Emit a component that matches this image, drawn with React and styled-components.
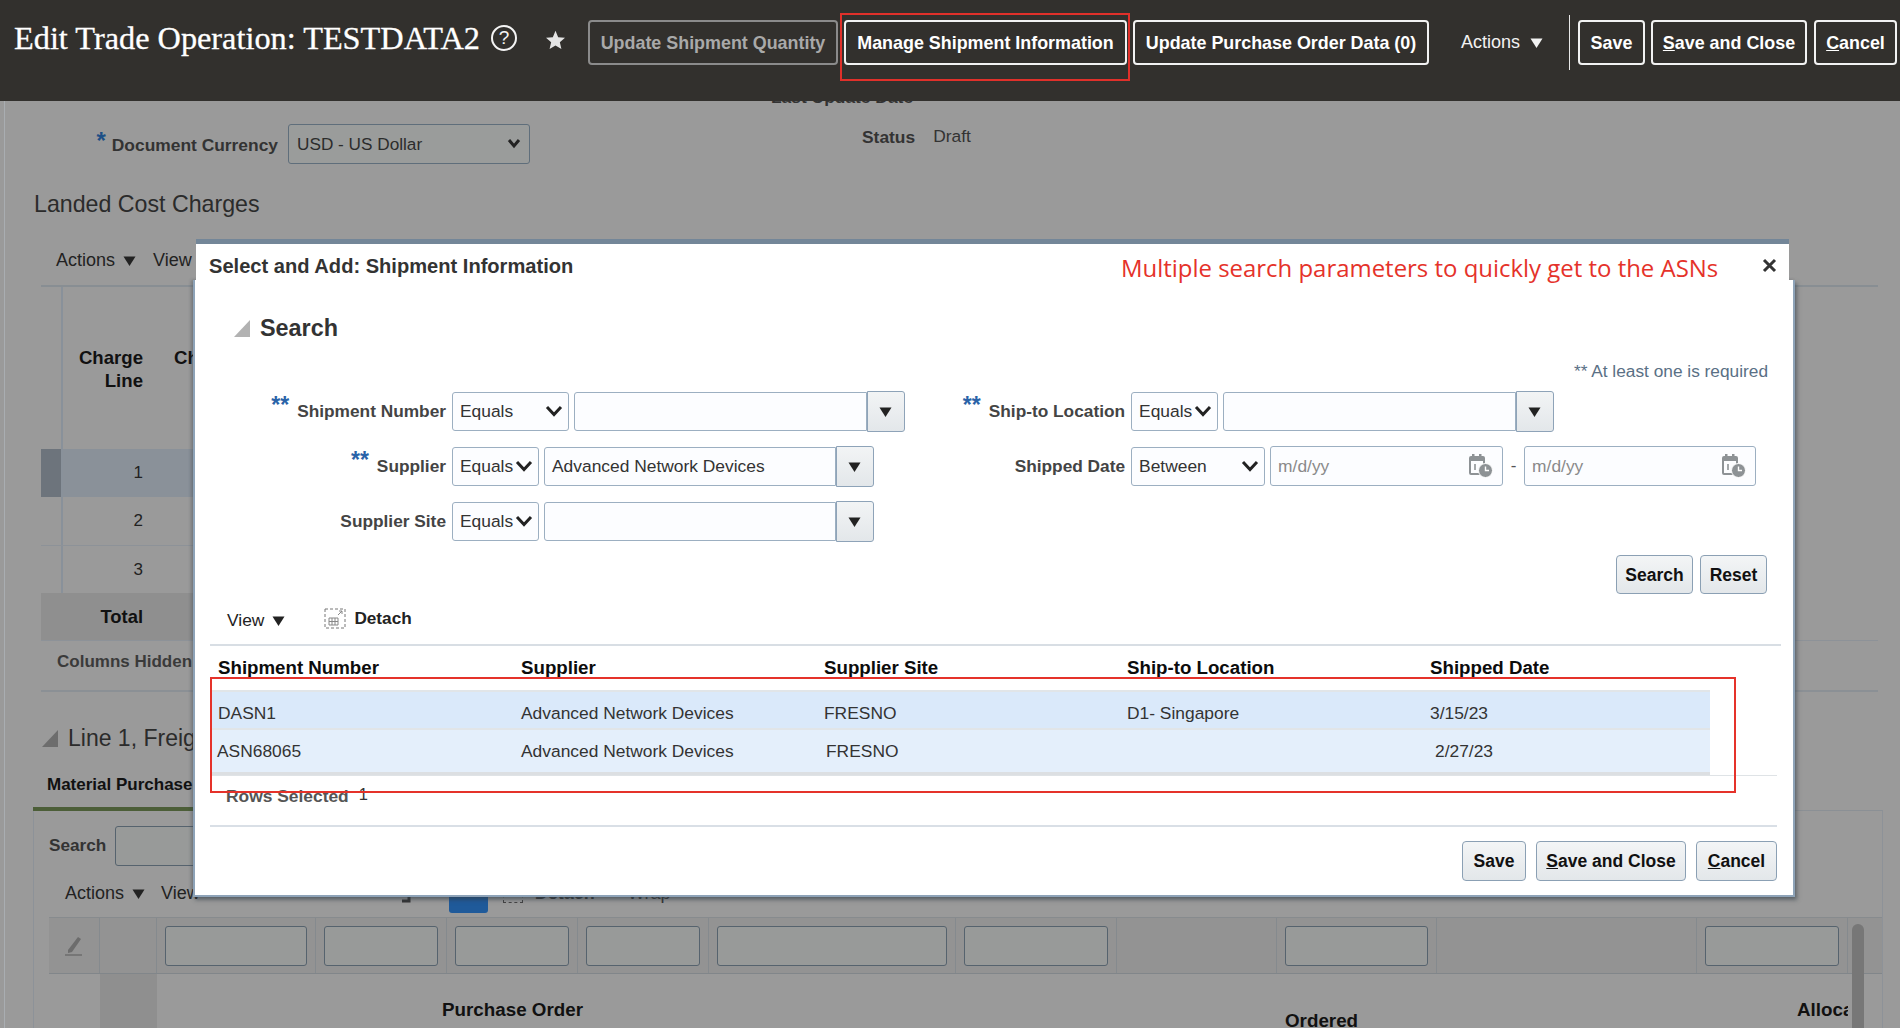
import React from 'react';
import styled, { createGlobalStyle } from 'styled-components';

const GlobalStyle = createGlobalStyle`
  html, body {
    margin: 0;
    padding: 0;
    background: #9a9a9a;
  }
  * {
    box-sizing: border-box;
  }
  body {
    font-family: 'Liberation Sans', Arial, sans-serif;
    color: #333;
  }
`;

const Root = styled.div`
  position: relative;
  width: 1900px;
  height: 1028px;
  overflow: hidden;
  background: #9a9a9a;
`;

/* ---------- page header ---------- */

const Header = styled.header`
  position: relative;
  z-index: 2;
  height: 101px;
  background: #32302d;
  display: flex;
  align-items: flex-start;
  padding: 20px 0 0 14px;
`;

const PageTitle = styled.h1`
  flex: none;
  margin: 0;
  width: 477px;
  height: 36px;
  font: 400 32.3px/36px 'Liberation Serif', Georgia, serif;
  -webkit-text-stroke: 0.3px #fff;
  color: #fff;
  white-space: nowrap;
`;

const HelpMark = styled.span`
  flex: none;
  width: 26px;
  height: 26px;
  margin-top: 5px;
  border: 2px solid #f4f4f4;
  border-radius: 50%;
  color: #f4f4f4;
  font: 400 19px/22px 'Liberation Sans', sans-serif;
  text-align: center;
`;

const StarMark = styled.svg`
  flex: none;
  width: 21px;
  height: 20px;
  margin: 10px 22px 0 28px;
  fill: #e4e4e4;
`;

const HeaderButton = styled.button`
  flex: none;
  height: 45px;
  width: ${props => props.$width}px;
  margin-right: ${props => props.$gap || 0}px;
  padding: 0;
  background: transparent;
  border: 2px solid ${props => (props.disabled ? '#8b8b8b' : '#f2f2f2')};
  border-radius: 4px;
  color: ${props => (props.disabled ? '#a9a9a9' : '#fff')};
  font: 700 17.9px/20px 'Liberation Sans', sans-serif;
  white-space: nowrap;
`;

const HeaderMenu = styled.span`
  flex: none;
  display: flex;
  align-items: center;
  gap: 10px;
  width: 140px;
  height: 45px;
  padding-left: 32px;
  color: #f2f2f2;
  font-size: 18px;
`;

const HeaderDivider = styled.span`
  flex: none;
  width: 1px;
  height: 55px;
  margin: -5px 8px 0 0;
  background: #e8e8e8;
`;

const DropArrow = styled.svg`
  width: ${props => props.$size || 13}px;
  height: ${props => props.$size || 13}px;
  flex: none;
  fill: ${props => props.$color || '#222'};
`;

/* ---------- dimmed page behind the dialog ---------- */

const Content = styled.main`
  margin-left: 4px;
  height: 927px;
  border-left: 1px solid #a9adb1;
  overflow: hidden;
`;

const PeekRow = styled.div`
  height: 18px;
  margin-top: -13px;
  padding-left: 766px;
  font: 700 17.4px/18px 'Liberation Sans', sans-serif;
  color: #333;
`;

const CurrencyRow = styled.div`
  display: flex;
  align-items: flex-start;
  height: 40px;
  margin-top: 18px;
`;

const CurrencyField = styled.div`
  display: flex;
  justify-content: flex-end;
  align-items: center;
  gap: 10px;
  width: 525px;
`;

const DimLabel = styled.span`
  font-weight: 700;
  font-size: 17.4px;
  color: #333;
  margin-top: 3px;
  white-space: nowrap;
`;

const DimStar = styled.span`
  color: #1d4f86;
  font-weight: 700;
  font-size: 24px;
  margin: -6px -4px 0 0;
`;

const DimSelect = styled.div`
  width: 242px;
  height: 40px;
  display: flex;
  align-items: center;
  justify-content: space-between;
  padding: 0 6px 0 8px;
  border: 1.5px solid #5f6e7b;
  border-radius: 3px;
  background: #9a9c9b;
  font-size: 17.2px;
  color: #2c2c2c;
`;

const StatusField = styled.div`
  display: flex;
  gap: 18px;
  margin: 2px 0 0 332px;
  font-size: 17.4px;
  line-height: 20px;
  color: #333;
`;

const StatusLabel = styled.b`
  font-size: 17.4px;
  margin-top: 1px;
`;

const SectionTitle = styled.h2`
  margin: 25px 0 0 29px;
  height: 30px;
  font: 400 23.2px/30px 'Liberation Sans', sans-serif;
  color: #2b2b2b;
`;

const DimToolbar = styled.div`
  display: flex;
  align-items: center;
  height: 24px;
  margin-top: 29px;
  padding-left: 51px;
  font-size: 18px;
  color: #222;
`;

const ToolbarMenu = styled.span`
  display: flex;
  align-items: center;
  gap: ${props => props.$gap || 8}px;
  margin-right: ${props => props.$after || 0}px;
`;

const ChargeTable = styled.section`
  width: 1837px;
  margin: 13px 0 0 36px;
  border-top: 2px solid #888e93;
  border-bottom: 2px solid #8b9095;
`;

const ChargeRow = styled.div`
  display: grid;
  grid-template-columns: 22px 80px 1fr;
  width: 300px;
  height: ${props => props.$height || 48}px;
  background: ${props => props.$background || 'transparent'};
  border-top: ${props => (props.$lined ? '1px solid #8d9298' : 'none')};
`;

const RowMarker = styled.div`
  border-right: 2px solid #89919a;
  background: ${props => props.$background || 'transparent'};
`;

const ChargeHead = styled.div`
  padding-top: 59px;
  font: 700 18.6px/23px 'Liberation Sans', sans-serif;
  color: #111;
  text-align: right;
`;

const ChargeHeadNext = styled(ChargeHead)`
  text-align: left;
  padding-left: 31px;
`;

const ChargeCell = styled.div`
  display: flex;
  align-items: center;
  justify-content: flex-end;
  font-size: 17px;
  color: #222;
`;

const TotalCell = styled.div`
  grid-column: 1 / span 2;
  display: flex;
  align-items: center;
  justify-content: flex-end;
  padding-right: -1px;
  font-weight: 700;
  font-size: 18.4px;
  color: #111;
`;

const HiddenCount = styled.div`
  height: 50px;
  padding: 11px 0 0 16px;
  border-top: 1px solid #8d9298;
  font: 700 17px/20px 'Liberation Sans', sans-serif;
  color: #3a3a3a;
`;

const LineHeading = styled.div`
  display: flex;
  align-items: center;
  gap: 10px;
  height: 30px;
  margin: 31px 0 0 37px;
  font-size: 23px;
  color: #2b2b2b;
`;

const Disclosure = styled.svg`
  width: 16px;
  height: 17px;
  flex: none;
  fill: ${props => props.$color};
`;

const TabLabel = styled.div`
  height: 22px;
  margin: 21px 0 0 42px;
  font: 700 17px/22px 'Liberation Sans', sans-serif;
  color: #111;
`;

const LinePanel = styled.section`
  position: relative;
  width: 1850px;
  height: 300px;
  margin: 14px 0 0 28px;
  border-top: 1px solid #8b9095;
  border-left: 1px solid #8d9298;
  border-right: 1px solid #8d9298;

  /* active tab underline */
  &::before {
    content: '';
    position: absolute;
    top: -4px;
    left: -1px;
    width: 300px;
    height: 4px;
    background: #4c5e38;
  }
`;

const PanelSearch = styled.div`
  display: flex;
  align-items: center;
  gap: 9px;
  height: 39px;
  margin: 15px 0 0 15px;
  font-weight: 700;
  font-size: 17.2px;
  color: #333;
`;

const DimInput = styled.div`
  width: ${props => (props.$width ? `${props.$width}px` : '100%')};
  height: 40px;
  border: 1.5px solid #56636e;
  border-radius: 3px;
  background: #989a99;
`;

const PanelToolbar = styled.div`
  display: flex;
  align-items: center;
  height: 24px;
  margin-top: 16px;
  padding-left: 31px;
  font-size: 18px;
  color: #222;
`;

const FreezeMark = styled.svg`
  width: 14px;
  height: 14px;
  margin: 6px 0 0 199px;
  stroke: #333;
  fill: none;
`;

const BlueToggle = styled.span`
  width: 39px;
  height: 34px;
  margin: 6px 15px 0 36px;
  border-radius: 3px;
  background: #1f5a9a;
`;

const PeekIcon = styled.span`
  width: 20px;
  height: 20px;
  margin-right: 12px;
  border: 1px dashed #444;
`;

const PeekText = styled.span`
  font-weight: ${props => (props.$bold ? 700 : 400)};
  margin-right: 33px;
  color: #333;
`;

const FILTER_COLUMNS = '51px 57px 159px 131px 131px 131px 247px 161px 160px 160px 260px 151px';

const FilterRow = styled.div`
  display: grid;
  grid-template-columns: ${FILTER_COLUMNS};
  height: 57px;
  margin: 12px 0 0 15px;
  background: #939393;
  border-top: 1px solid #878b8e;
  border-bottom: 1px solid #81868a;
`;

const FilterCell = styled.div`
  display: flex;
  align-items: center;
  justify-content: center;
  padding: 0 8px;
  border-right: 1px solid #858a8e;
`;

const HeadRow = styled.div`
  display: grid;
  grid-template-columns: ${FILTER_COLUMNS};
  height: 60px;
  margin-left: 15px;
`;

const HeadSpacer = styled.div`
  background: ${props => props.$background || 'transparent'};
`;

const HeadLabel = styled.div`
  display: flex;
  justify-content: ${props => props.$justify || 'flex-start'};
  padding: ${props => props.$pad || '25px 0 0 8px'};
  font: 700 18.8px/22px 'Liberation Sans', sans-serif;
  color: #111;
  white-space: nowrap;
  overflow: ${props => (props.$clip ? 'hidden' : 'visible')};
`;

const PencilMark = styled.svg`
  width: 20px;
  height: 22px;
`;

const ScrollThumb = styled.div`
  position: absolute;
  top: 113px;
  left: 1818px;
  width: 12px;
  height: 130px;
  border-radius: 6px;
  background: #777;
`;

/* ---------- dialog ---------- */

const Dialog = styled.div`
  position: absolute;
  z-index: 3;
  left: 193px;
  top: 239px;
  width: 1602px;
  height: 658px;
  display: flex;
  flex-direction: column;
`;

const DialogTitleBar = styled.div`
  position: relative;
  z-index: 1;
  display: flex;
  justify-content: space-between;
  align-items: center;
  height: 43px;
  margin: 0 6px 0 3px;
  padding: 5px 12px 0 13px;
  background: #fff;
  border-top: 5px solid #738698;
`;

const DialogTitle = styled.h2`
  margin: 0;
  font: 700 20.1px/26px 'Liberation Sans', sans-serif;
  color: #333;
`;

const CloseMark = styled.svg`
  width: 15px;
  height: 15px;
  stroke: #333;
  stroke-width: 3;
`;

const DialogBody = styled.div`
  flex: 1;
  margin-top: -2px;
  background: #fff;
  border: solid #8ea3b8;
  border-width: 0 2px 2px;
  box-shadow: 2px 3px 4px rgba(50, 60, 70, 0.55), -2px 0 3px rgba(50, 60, 70, 0.3);
`;

const SearchHeading = styled.div`
  display: flex;
  align-items: center;
  gap: 10px;
  height: 30px;
  margin-top: 33px;
  padding-left: 39px;
  font: 700 23.4px/30px 'Liberation Sans', sans-serif;
  color: #333;
`;

const RequiredNote = styled.div`
  height: 20px;
  margin-top: 18px;
  padding-right: 25px;
  text-align: right;
  font: 400 17.3px/20px 'Liberation Sans', sans-serif;
  color: #5a7085;
`;

const SearchForm = styled.div`
  display: flex;
  margin-top: 10px;
`;

const FormColumn = styled.div`
  display: flex;
  flex-direction: column;
  gap: 15px;
  width: ${props => props.$width}px;
`;

const FormRow = styled.div`
  display: flex;
  align-items: center;
  gap: 5px;
  height: 40px;
`;

const FieldLabel = styled.label`
  display: flex;
  justify-content: flex-end;
  align-items: center;
  width: ${props => props.$width}px;
  margin-right: 1px;
  font: 700 17.3px/20px 'Liberation Sans', sans-serif;
  color: #444;
  white-space: nowrap;
`;

const RequiredStars = styled.span`
  margin: -13px 8px 0 0;
  color: #2a63a8;
  font-size: 23px;
  font-weight: 700;
`;

const OperatorSelect = styled.div`
  width: ${props => props.$width}px;
  height: 39px;
  display: flex;
  align-items: center;
  justify-content: space-between;
  padding: 0 5px 0 7px;
  border: 1.5px solid #9cafc1;
  border-radius: 3px;
  background: #fcfdff;
  font-size: 17.4px;
  color: #333;
`;

const Chevron = styled.svg`
  width: 18px;
  height: 12px;
  flex: none;
  fill: none;
  stroke: ${props => props.$color || '#222'};
  stroke-width: 3;
`;

const Combo = styled.div`
  display: flex;
  align-items: center;
`;

const ComboInput = styled.div`
  width: ${props => props.$width}px;
  height: 39px;
  display: flex;
  align-items: center;
  padding-left: 7px;
  border: 1.5px solid #9cafc1;
  border-radius: 3px 0 0 3px;
  background: #fcfdff;
  font-size: 17.4px;
  color: #333;
`;

const ComboButton = styled.div`
  width: 38px;
  height: 41px;
  display: flex;
  align-items: center;
  justify-content: center;
  padding-right: 2px;
  border: 1.5px solid #8ea3b8;
  border-radius: 0 3px 3px 0;
  background: linear-gradient(#f2f4f5, #e3e7ea);
`;

const DateInput = styled.div`
  width: ${props => props.$width}px;
  height: 40px;
  display: flex;
  align-items: center;
  justify-content: space-between;
  padding: 0 9px 0 7px;
  border: 1.5px solid #9cafc1;
  border-radius: 3px;
  background: #fcfdff;
  font-size: 17.4px;
  color: #8a8a8a;
`;

const DateDash = styled.span`
  width: 11px;
  text-align: center;
  font-size: 17px;
  color: #555;
`;

const CalendarMark = styled.svg`
  width: 24px;
  height: 24px;
  flex: none;
`;

const ButtonBar = styled.div`
  display: flex;
  justify-content: flex-end;
  gap: ${props => props.$gap}px;
  margin-top: ${props => props.$top}px;
  padding-right: ${props => props.$right}px;
`;

const DialogButton = styled.button`
  height: ${props => props.$height || 40}px;
  width: ${props => props.$width}px;
  padding: 0;
  border: 1.5px solid #8ba0b4;
  border-radius: 4px;
  background: linear-gradient(#f3f5f6, #e3e7ea);
  color: #111;
  font: 700 17.5px/20px 'Liberation Sans', sans-serif;
`;

const ResultsToolbar = styled.div`
  display: flex;
  align-items: center;
  height: 22px;
  margin-top: 15px;
  padding-left: 32px;
  font-size: 17.4px;
  color: #222;
`;

const DetachMark = styled.svg`
  width: 22px;
  height: 21px;
  margin: -3px 8px 0 39px;
`;

const DetachLabel = styled.b`
  margin-top: -4px;
  font-size: 17.2px;
  color: #222;
`;

const Results = styled.div`
  width: 1571px;
  margin: 13px 0 0 15px;
  border-top: 2px solid #d8dee4;
`;

const ResultsBox = styled.div`
  width: 1567px;
  border-bottom: 1px solid #dfe3e6;
`;

const COLUMN_GRID = 'repeat(5, 303px) 0';

const ResultsHead = styled.div`
  display: grid;
  grid-template-columns: ${COLUMN_GRID};
  height: 44px;
  padding-top: 11px;
  font: 700 18.7px/22px 'Liberation Sans', sans-serif;
  color: #0c0c0c;
`;

const ResultsCellHead = styled.span`
  padding-left: 8px;
`;

const ResultRow = styled.div`
  display: grid;
  grid-template-columns: ${COLUMN_GRID};
  align-items: center;
  width: 1500px;
  height: 38px;
  padding-top: 6px;
  background: #dae9fa;
  border-top: 2px solid #e1e5e8;
  font-size: 17.4px;
  color: #333;
`;

const ResultRowLast = styled(ResultRow)`
  height: 47px;
  padding: 0;
  background: #e4effb;
  border-bottom: 3px solid #dcdfe2;
`;

const ResultCell = styled.span`
  padding-left: ${props => props.$indent}px;
`;

const RowsSelected = styled.div`
  display: flex;
  gap: 10px;
  height: 22px;
  margin-top: 9px;
  padding-left: 16px;
  font: 400 16.5px/22px 'Liberation Sans', sans-serif;
  color: #333;
`;

const RowsSelectedLabel = styled.b`
  font-size: 17.4px;
  color: #555;
`;

const RowsSelectedCount = styled.span`
  margin-top: -2px;
`;

const FooterLine = styled.div`
  width: 1567px;
  height: 2px;
  margin: 18px 0 0 15px;
  background: #d9dfe6;
`;

/* ---------- red annotations laid over the screenshot ---------- */

const Callout = styled.div`
  position: absolute;
  z-index: 4;
  left: 1121px;
  top: 250px;
  font: 400 23.95px/36px 'Open Sans', 'Noto Sans', sans-serif;
  color: #e5322a;
  white-space: nowrap;
`;

const ManageHighlight = styled.div`
  position: absolute;
  z-index: 4;
  left: 840px;
  top: 13px;
  width: 290px;
  height: 68px;
  border: 2px solid #e0302a;
`;

const RowsHighlight = styled.div`
  position: absolute;
  z-index: 4;
  left: 210px;
  top: 677px;
  width: 1526px;
  height: 116px;
  border: 2px solid #e5322a;
`;

const Arrow = ({ color, size }) => (
  <DropArrow viewBox="0 0 13 13" $color={color} $size={size}>
    <polygon points="0.5,2.5 12.5,2.5 6.5,12" />
  </DropArrow>
);

const Corner = ({ color }) => (
  <Disclosure viewBox="0 0 16 17" $color={color}>
    <polygon points="16,0 16,17 0,17" />
  </Disclosure>
);

const Calendar = () => (
  <CalendarMark viewBox="0 0 24 24">
    <rect x="1" y="3" width="14" height="17" rx="1" fill="none" stroke="#8d9295" strokeWidth="2" />
    <rect x="1" y="3" width="14" height="4" fill="#8d9295" />
    <rect x="3" y="0" width="2.5" height="5" fill="#8d9295" />
    <rect x="10" y="0" width="2.5" height="5" fill="#8d9295" />
    <path d="M6 10v6" stroke="#8d9295" strokeWidth="1.6" />
    <circle cx="16.5" cy="16.5" r="7" fill="#8d9295" stroke="#fff" />
    <path d="M16.5 12.5v4h3.5" stroke="#fff" strokeWidth="1.4" fill="none" />
  </CalendarMark>
);

const Operator = ({ width, children }) => (
  <OperatorSelect $width={width}>
    <span>{children}</span>
    <Chevron viewBox="0 0 18 12">
      <polyline points="2,2 9,9.5 16,2" />
    </Chevron>
  </OperatorSelect>
);

const ComboField = ({ width, value }) => (
  <Combo>
    <ComboInput $width={width}>{value}</ComboInput>
    <ComboButton>
      <Arrow />
    </ComboButton>
  </Combo>
);

const BackgroundPage = () => (
  <Content>
    <PeekRow>Last Update Date</PeekRow>
    <CurrencyRow>
      <CurrencyField>
        <DimStar>*</DimStar>
        <DimLabel>Document Currency</DimLabel>
        <DimSelect>
          <span>USD - US Dollar</span>
          <Chevron viewBox="0 0 18 12" $color="#222">
            <polyline points="4,2 9,8 14,2" />
          </Chevron>
        </DimSelect>
      </CurrencyField>
      <StatusField>
        <StatusLabel>Status</StatusLabel>
        <span>Draft</span>
      </StatusField>
    </CurrencyRow>
    <SectionTitle>Landed Cost Charges</SectionTitle>
    <DimToolbar>
      <ToolbarMenu $after={17}>
        Actions <Arrow />
      </ToolbarMenu>
      <span>View</span>
    </DimToolbar>
    <ChargeTable>
      <ChargeRow $height={162}>
        <RowMarker />
        <ChargeHead>
          Charge
          <br />
          Line
        </ChargeHead>
        <ChargeHeadNext>Charge</ChargeHeadNext>
      </ChargeRow>
      <ChargeRow $background="#8a9199">
        <RowMarker $background="#6d747c" />
        <ChargeCell>1</ChargeCell>
      </ChargeRow>
      <ChargeRow>
        <RowMarker />
        <ChargeCell>2</ChargeCell>
      </ChargeRow>
      <ChargeRow $lined>
        <RowMarker />
        <ChargeCell>3</ChargeCell>
      </ChargeRow>
      <ChargeRow $background="#8f8f8f" $height={47}>
        <TotalCell>Total</TotalCell>
      </ChargeRow>
      <HiddenCount>Columns Hidden</HiddenCount>
    </ChargeTable>
    <LineHeading>
      <Corner color="#6d6d6d" />
      Line 1, Freight
    </LineHeading>
    <TabLabel>Material Purchase Order</TabLabel>
    <LinePanel>
      <PanelSearch>
        Search
        <DimInput $width={200} />
      </PanelSearch>
      <PanelToolbar>
        <ToolbarMenu $after={16}>
          Actions <Arrow />
        </ToolbarMenu>
        <span>View</span>
        <FreezeMark viewBox="0 0 14 14">
          <path d="M10 1v11H3" strokeWidth="3" />
        </FreezeMark>
        <BlueToggle />
        <PeekIcon />
        <PeekText $bold>Detach</PeekText>
        <PeekText>Wrap</PeekText>
      </PanelToolbar>
      <FilterRow>
        <FilterCell>
          <PencilMark viewBox="0 0 20 22">
            <path d="M4 15 14 2l3 2-9 13-4 1z" fill="#6c6c6c" />
            <path d="M1 20h17" stroke="#6c6c6c" strokeWidth="1.5" />
          </PencilMark>
        </FilterCell>
        <FilterCell />
        <FilterCell>
          <DimInput />
        </FilterCell>
        <FilterCell>
          <DimInput />
        </FilterCell>
        <FilterCell>
          <DimInput />
        </FilterCell>
        <FilterCell>
          <DimInput />
        </FilterCell>
        <FilterCell>
          <DimInput />
        </FilterCell>
        <FilterCell>
          <DimInput />
        </FilterCell>
        <FilterCell />
        <FilterCell>
          <DimInput />
        </FilterCell>
        <FilterCell />
        <FilterCell>
          <DimInput />
        </FilterCell>
      </FilterRow>
      <HeadRow>
        <HeadSpacer />
        <HeadSpacer $background="#8f8f8f" />
        <HeadSpacer />
        <HeadSpacer />
        <HeadLabel $justify="center" $pad="25px 0 0">
          Purchase Order
        </HeadLabel>
        <HeadSpacer />
        <HeadSpacer />
        <HeadSpacer />
        <HeadSpacer />
        <HeadLabel $pad="36px 0 0 8px">Ordered</HeadLabel>
        <HeadSpacer />
        <HeadLabel $pad="25px 0 0 100px" $clip>
          Allocated
        </HeadLabel>
      </HeadRow>
      <ScrollThumb />
    </LinePanel>
  </Content>
);

const ShipmentDialog = () => (
  <Dialog>
    <DialogTitleBar>
      <DialogTitle>Select and Add: Shipment Information</DialogTitle>
      <CloseMark viewBox="0 0 15 15">
        <path d="M2 2l11 11M13 2 2 13" />
      </CloseMark>
    </DialogTitleBar>
    <DialogBody>
      <SearchHeading>
        <Corner color="#b2b2b2" />
        Search
      </SearchHeading>
      <RequiredNote>** At least one is required</RequiredNote>
      <SearchForm>
        <FormColumn $width={756}>
          <FormRow>
            <FieldLabel $width={251}>
              <RequiredStars>**</RequiredStars>
              Shipment Number
            </FieldLabel>
            <Operator width={117}>Equals</Operator>
            <ComboField width={293} />
          </FormRow>
          <FormRow>
            <FieldLabel $width={251}>
              <RequiredStars>**</RequiredStars>
              Supplier
            </FieldLabel>
            <Operator width={87}>Equals</Operator>
            <ComboField width={292} value="Advanced Network Devices" />
          </FormRow>
          <FormRow>
            <FieldLabel $width={251}>Supplier Site</FieldLabel>
            <Operator width={87}>Equals</Operator>
            <ComboField width={292} />
          </FormRow>
        </FormColumn>
        <FormColumn $width={844}>
          <FormRow>
            <FieldLabel $width={175}>
              <RequiredStars>**</RequiredStars>
              Ship-to Location
            </FieldLabel>
            <Operator width={87}>Equals</Operator>
            <ComboField width={293} />
          </FormRow>
          <FormRow>
            <FieldLabel $width={175}>Shipped Date</FieldLabel>
            <Operator width={134}>Between</Operator>
            <DateInput $width={233}>
              m/d/yy
              <Calendar />
            </DateInput>
            <DateDash>-</DateDash>
            <DateInput $width={232}>
              m/d/yy
              <Calendar />
            </DateInput>
          </FormRow>
        </FormColumn>
      </SearchForm>
      <ButtonBar $gap={7} $top={14} $right={26}>
        <DialogButton $width={77} $height={39}>
          Search
        </DialogButton>
        <DialogButton $width={67} $height={39}>
          Reset
        </DialogButton>
      </ButtonBar>
      <ResultsToolbar>
        <ToolbarMenu>
          View <Arrow />
        </ToolbarMenu>
        <DetachMark viewBox="0 0 22 21">
          <rect x="1" y="1" width="20" height="19" fill="none" stroke="#777" strokeDasharray="3 2" />
          <path d="M5 10h9v7H5zM5 13.5h9M8 10v7M11 10v7" fill="none" stroke="#888" />
          <path d="M14 7l4-4M15 3h3v3" fill="none" stroke="#888" />
        </DetachMark>
        <DetachLabel>Detach</DetachLabel>
      </ResultsToolbar>
      <Results>
        <ResultsBox>
          <ResultsHead>
            <ResultsCellHead>Shipment Number</ResultsCellHead>
            <ResultsCellHead>Supplier</ResultsCellHead>
            <ResultsCellHead>Supplier Site</ResultsCellHead>
            <ResultsCellHead>Ship-to Location</ResultsCellHead>
            <ResultsCellHead>Shipped Date</ResultsCellHead>
          </ResultsHead>
          <ResultRow>
            <ResultCell $indent={8}>DASN1</ResultCell>
            <ResultCell $indent={8}>Advanced Network Devices</ResultCell>
            <ResultCell $indent={8}>FRESNO</ResultCell>
            <ResultCell $indent={8}>D1- Singapore</ResultCell>
            <ResultCell $indent={8}>3/15/23</ResultCell>
          </ResultRow>
          <ResultRowLast>
            <ResultCell $indent={7}>ASN68065</ResultCell>
            <ResultCell $indent={8}>Advanced Network Devices</ResultCell>
            <ResultCell $indent={10}>FRESNO</ResultCell>
            <ResultCell $indent={8} />
            <ResultCell $indent={13}>2/27/23</ResultCell>
          </ResultRowLast>
        </ResultsBox>
        <RowsSelected>
          <RowsSelectedLabel>Rows Selected</RowsSelectedLabel>
          <RowsSelectedCount>1</RowsSelectedCount>
        </RowsSelected>
      </Results>
      <FooterLine />
      <ButtonBar $gap={10} $top={14} $right={16}>
        <DialogButton $width={64}>Save</DialogButton>
        <DialogButton $width={150}>
          <u>S</u>ave and Close
        </DialogButton>
        <DialogButton $width={81}>
          <u>C</u>ancel
        </DialogButton>
      </ButtonBar>
    </DialogBody>
  </Dialog>
);

const App = () => (
  <Root>
    <GlobalStyle />
    <Header>
      <PageTitle>Edit Trade Operation: TESTDATA2</PageTitle>
      <HelpMark>?</HelpMark>
      <StarMark viewBox="0 0 24 24">
        <polygon points="12,1 15.2,8.6 23.4,9.3 17.2,14.7 19.1,22.8 12,18.5 4.9,22.8 6.8,14.7 0.6,9.3 8.8,8.6" />
      </StarMark>
      <HeaderButton disabled $width={250} $gap={6}>
        Update Shipment Quantity
      </HeaderButton>
      <HeaderButton $width={283} $gap={6}>
        Manage Shipment Information
      </HeaderButton>
      <HeaderButton $width={296}>Update Purchase Order Data (0)</HeaderButton>
      <HeaderMenu>
        Actions <Arrow color="#f2f2f2" />
      </HeaderMenu>
      <HeaderDivider />
      <HeaderButton $width={67} $gap={6}>
        Save
      </HeaderButton>
      <HeaderButton $width={156} $gap={7}>
        <u>S</u>ave and Close
      </HeaderButton>
      <HeaderButton $width={83}>
        <u>C</u>ancel
      </HeaderButton>
    </Header>
    <BackgroundPage />
    <ShipmentDialog />
    <Callout>Multiple search parameters to quickly get to the ASNs</Callout>
    <ManageHighlight />
    <RowsHighlight />
  </Root>
);

export default App;
